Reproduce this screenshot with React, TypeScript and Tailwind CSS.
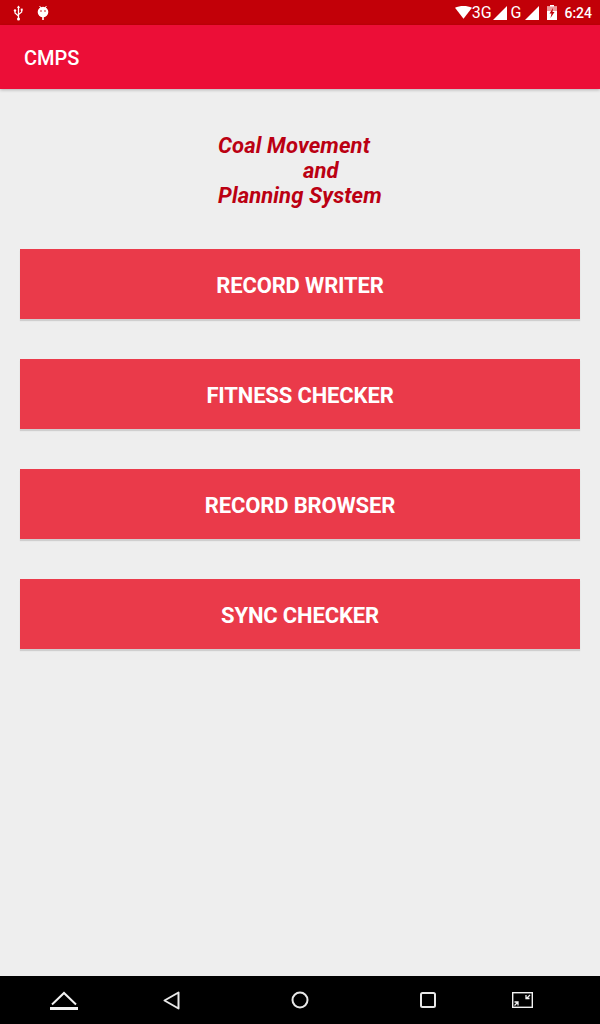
const menuItems = ["RECORD WRITER", "FITNESS CHECKER", "RECORD BROWSER", "SYNC CHECKER"];

function StatusBar() {
  return (
    <div className="flex h-[25px] flex-none items-center justify-between bg-[#c20008] pl-[12px] pr-[8px] text-white">
      <div className="flex items-center gap-[12px]">
        <svg width="13" height="16" viewBox="0 0 12 16" fill="white" stroke="white">
          <path d="M6 1v13" strokeWidth="1.3" fill="none" />
          <path d="M6 0.5 4.5 3h3z" stroke="none" />
          <path d="M6 11 2.5 8V6M6 9.5l3.2-2.5V5" strokeWidth="1.2" fill="none" />
          <circle cx="6" cy="14" r="1.5" stroke="none" />
          <circle cx="2.5" cy="5.5" r="1.2" stroke="none" />
          <rect x="8.2" y="3.6" width="2" height="2" stroke="none" />
        </svg>
        <svg width="12" height="16" viewBox="0 0 12 16" fill="white">
          <path d="M2.6 1 4 3M9.4 1 8 3" stroke="white" strokeWidth="1" />
          <circle cx="6" cy="7" r="5.300" />
          <rect x="5.200" y="10" width="1.600" height="5" />
          <circle cx="4" cy="6" r="0.800" fill="#c20008" />
          <circle cx="8" cy="6" r="0.800" fill="#c20008" />
        </svg>
      </div>
      <div className="flex items-center font-['Roboto',sans-serif] text-[16px] leading-none">
        <svg width="17" height="13" viewBox="0 0 18 13" fill="white">
          <path d="M0 1.5C5-1 13-1 18 1.5L9 13z" />
        </svg>
        <span>3G</span>
        <svg className="ml-[1px]" width="14" height="14" viewBox="0 0 14 14" fill="white">
          <path d="M14 0v14H0z" />
        </svg>
        <span className="ml-[4px]">G</span>
        <svg className="ml-[4px]" width="14" height="14" viewBox="0 0 14 14" fill="white">
          <path d="M14 0v14H0z" />
        </svg>
        <svg className="ml-[8px]" width="10" height="15" viewBox="0 0 10 15" fill="white">
          <path d="M3 0h4v1.5h3V15H0V1.500h3z" />
          <path d="M0 1.500h10V6H0z" fill="#ee9a9c" />
          <path d="M6 3 2.500 8.500h2L3.500 13 7.500 7h-2z" fill="#c20008" />
        </svg>
        <span className="ml-[7px] text-[14px] font-medium">6:24</span>
      </div>
    </div>
  );
}

function NavBar() {
  return (
    <div className="flex h-[48px] flex-none items-center bg-black pl-[50px]">
      <svg width="28" height="20" viewBox="0 0 28 20" fill="none" stroke="#f2f2f2" strokeWidth="2">
        <path d="M2 14.500 14 3l12 11.500" />
        <path d="M0 18.500h28" strokeWidth="3" />
      </svg>
      <svg className="ml-[85px]" width="17" height="19" viewBox="0 0 17 19" fill="none" stroke="#e8e8e8" strokeWidth="2">
        <path d="M15.500 1.500v16L1.500 9.500z" strokeLinejoin="round" />
      </svg>
      <svg className="ml-[111px]" width="18" height="18" viewBox="0 0 18 18" fill="none" stroke="#e8e8e8" strokeWidth="2">
        <circle cx="9" cy="9" r="7.500" />
      </svg>
      <svg className="ml-[111px]" width="16" height="16" viewBox="0 0 16 16" fill="none" stroke="#e8e8e8" strokeWidth="2">
        <rect x="1" y="1" width="14" height="14" rx="1.500" />
      </svg>
      <svg className="ml-[76px]" width="21" height="16" viewBox="0 0 21 16" fill="none" stroke="#f2f2f2">
        <rect x="0.700" y="0.700" width="19.600" height="14.600" strokeWidth="1.400" />
        <path d="M18 3l-3.500 3.500M14 3v3.500h3.500M2.500 13.500 6 10M2.500 10H6v3.500" strokeWidth="1.300" />
      </svg>
    </div>
  );
}

export default function App() {
  return (
    <div className="flex h-[1024px] w-[600px] flex-col overflow-hidden bg-[#eeeeee] font-['Roboto',sans-serif]">
      <StatusBar />
      <header className="flex h-[64px] flex-none items-center bg-[#ec0e37] pl-[24px] pt-[2px] text-[20px] font-medium text-white shadow-[0_1px_3px_rgba(0,0,0,0.25)]">
        CMPS
      </header>
      <main className="flex flex-1 flex-col px-[20px] pt-[44px]">
        <div className="ml-[198px] flex w-[170px] flex-col whitespace-nowrap text-[22px] font-bold italic leading-[25px] tracking-[0.12px] text-[#bb0012]">
          <span>Coal Movement</span>
          <span className="pl-[85px]">and</span>
          <span>Planning System</span>
        </div>
        <div className="mt-[41px] flex flex-col gap-[40px]">
          {menuItems.map((item) => (
            <button
              key={item}
              type="button"
              className="flex h-[70px] items-center justify-center bg-[#ea3a4a] pt-[2px] text-[22px] font-bold tracking-[-0.15px] text-white shadow-[0_2px_1px_rgba(0,0,0,0.13)]"
            >
              {item}
            </button>
          ))}
        </div>
      </main>
      <NavBar />
    </div>
  );
}
